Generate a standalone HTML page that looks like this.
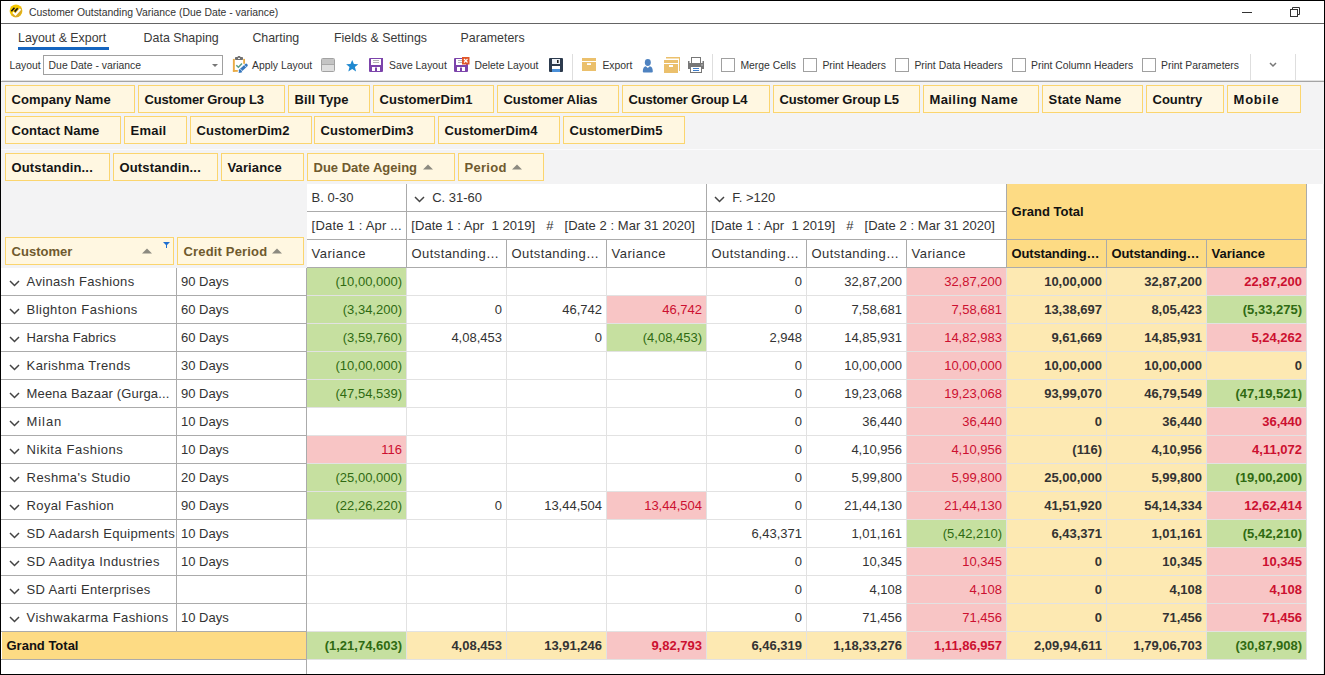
<!DOCTYPE html><html><head><meta charset="utf-8"><style>
html,body{margin:0;padding:0;width:1325px;height:675px;overflow:hidden;background:#fff}
body{position:relative;font-family:"Liberation Sans", sans-serif}
body>div,body>svg{position:absolute;white-space:nowrap}
</style></head><body>
<div style="left:0;top:0;width:1325px;height:675px;background:#fff"></div>
<svg style="left:9px;top:4px" width="14" height="14" viewBox="0 0 14 14">
<circle cx="7" cy="6.9" r="6.4" fill="#f6c800"/>
<path d="M2.5 11 L11.8 3.2 A6.4 6.4 0 0 1 5 13 Z" fill="#d6a62c" opacity="0.85"/>
<path d="M3.9 8.3 L6.5 10.6 L11.5 5" stroke="#fff" stroke-width="1.9" fill="none"/>
<path d="M2.3 7.3 L5.5 3.7 M5.6 7.6 L8.7 4.3" stroke="#151515" stroke-width="1.6"/>
</svg>
<div style="left:29px;top:6px;font-size:10.4px;color:#333;line-height:14px">Customer Outstanding Variance (Due Date - variance)</div>
<div style="left:1242px;top:12px;width:10px;height:1px;background:#333"></div>
<svg style="left:1289px;top:6px" width="12" height="12" viewBox="0 0 12 12">
<path d="M3.5 3 V1.5 H10.5 V8.5 H9" stroke="#333" stroke-width="1" fill="none"/>
<rect x="1.5" y="3.5" width="7" height="7" stroke="#333" stroke-width="1" fill="#fff"/>
</svg>
<div style="left:1px;top:23px;width:1323px;height:1px;background:#646464"></div>
<div style="left:18px;top:30px;font-size:12.4px;color:#3a3a3a;line-height:16px">Layout &amp; Export</div>
<div style="left:143.6px;top:30px;font-size:12.4px;color:#3a3a3a;line-height:16px">Data Shaping</div>
<div style="left:252.4px;top:30px;font-size:12.4px;color:#3a3a3a;line-height:16px">Charting</div>
<div style="left:334px;top:30px;font-size:12.4px;color:#3a3a3a;line-height:16px">Fields &amp; Settings</div>
<div style="left:460.6px;top:30px;font-size:12.4px;color:#3a3a3a;line-height:16px">Parameters</div>
<div style="left:18px;top:47px;width:91px;height:3px;background:#1565c0"></div>
<div style="left:9.5px;top:59px;font-size:10.4px;color:#333;line-height:14px">Layout</div>
<div style="left:43px;top:55px;width:180px;height:20px;border:1px solid #a0a0a0;box-sizing:border-box;background:#fff"></div>
<div style="left:48.6px;top:59px;font-size:10.4px;color:#333;line-height:14px">Due Date - variance</div>
<svg style="left:212px;top:64px" width="7" height="4"><path d="M0 0 H6 L3 3 Z" fill="#777"/></svg>
<svg style="left:232px;top:56px" width="16" height="18" viewBox="0 0 16 18">
<rect x="0.9" y="2.9" width="1.9" height="12.9" fill="#e9ab45"/>
<rect x="0.9" y="14" width="4.9" height="1.8" fill="#e9ab45"/>
<rect x="11.2" y="2.9" width="1.8" height="4.9" fill="#e9ab45"/>
<rect x="3" y="1" width="8" height="3" rx="0.8" fill="#707070"/>
<rect x="5.6" y="0" width="2.8" height="2" rx="0.8" fill="#707070"/>
<rect x="6" y="1.9" width="2" height="1" fill="#fff"/>
<path d="M4.3 9.3 L6.4 11.3 L10 7.4" stroke="#5a9e86" stroke-width="1.5" fill="none"/>
<path d="M8.4 14.6 L14.1 9.3" stroke="#3576bd" stroke-width="3.2" stroke-linecap="round"/>
<path d="M6.6 17 L7.3 13.3 L10.3 16.3 Z" fill="#3576bd"/>
<path d="M8.3 13 L10.2 15 M12.4 9.2 L14.3 11.2" stroke="#fff" stroke-width="0.7"/>
</svg>
<div style="left:252px;top:59px;font-size:10.4px;color:#333;line-height:14px">Apply Layout</div>
<div style="left:321px;top:58px;width:14px;height:14px;border:1px solid #a2a2a2;border-radius:1.5px;box-sizing:border-box;background:linear-gradient(#c4c4c4 0,#c4c4c4 4.5px,#a8a8a8 4.5px,#a8a8a8 5.5px,#dedede 5.5px)"></div>
<svg style="left:345.6px;top:59.8px" width="13" height="12" viewBox="0 0 13 12">
<path d="M6.2 0 L7.9 4.0 L12.3 4.2 L8.9 7.0 L10.1 11.4 L6.2 9.0 L2.3 11.4 L3.5 7.0 L0.1 4.2 L4.5 4.0 Z" fill="#1e88d0"/>
</svg>
<svg style="left:369px;top:58px" width="14" height="14" viewBox="0 0 14 14"><path d="M0 1 Q0 0 1 0 H14 V13 Q14 14 13 14 H1 Q0 14 0 13 Z" fill="#7c44ab"/>
<rect x="2" y="1" width="10" height="6" fill="#fff"/>
<rect x="4" y="2" width="6" height="1" fill="#b5b5b5"/><rect x="4" y="4" width="6" height="1" fill="#b5b5b5"/>
<rect x="3" y="9" width="8" height="4" fill="#fff"/><rect x="6" y="9.5" width="2" height="3.5" fill="#7c44ab"/></svg>
<div style="left:389px;top:59px;font-size:10.4px;color:#333;line-height:14px">Save Layout</div>
<svg style="left:454px;top:57px" width="16" height="15" viewBox="0 -1 16 15"><path d="M0 1 Q0 0 1 0 H14 V13 Q14 14 13 14 H1 Q0 14 0 13 Z" fill="#7c44ab"/>
<rect x="2" y="1" width="10" height="6" fill="#fff"/>
<rect x="4" y="2" width="6" height="1" fill="#b5b5b5"/><rect x="4" y="4" width="6" height="1" fill="#b5b5b5"/>
<rect x="3" y="9" width="8" height="4" fill="#fff"/><rect x="6" y="9.5" width="2" height="3.5" fill="#7c44ab"/>
<rect x="8" y="-1" width="7.5" height="7.5" fill="#e0572a"/>
<path d="M10 1 L13.5 4.5 M13.5 1 L10 4.5" stroke="#fff" stroke-width="1.1"/></svg>
<div style="left:474.4px;top:59px;font-size:10.4px;color:#333;line-height:14px">Delete Layout</div>
<svg style="left:549px;top:58px" width="14" height="14" viewBox="0 0 14 14">
<rect x="0" y="0" width="14" height="14" rx="1" fill="#2d3b4e"/>
<rect x="3" y="1" width="8" height="5" fill="#eef2f7"/><rect x="8" y="2" width="1.6" height="3" fill="#222"/>
<rect x="3" y="8" width="8" height="6" fill="#fff"/><rect x="3" y="11" width="8" height="3" fill="#4a90d9"/>
</svg>
<div style="left:572px;top:54px;width:1px;height:26px;background:#dedede"></div>
<svg style="left:582px;top:58px" width="14" height="13" viewBox="0 0 14 13">
<rect x="0" y="0" width="14" height="3" fill="#ebc06c"/>
<rect x="0" y="4" width="14" height="9" fill="#ebc06c"/>
<rect x="5" y="5.2" width="4" height="1.8" fill="#fff"/>
</svg>
<div style="left:602.4px;top:59px;font-size:10.4px;color:#333;line-height:14px">Export</div>
<svg style="left:642px;top:58px" width="12" height="15" viewBox="0 0 12 15">
<ellipse cx="5.8" cy="4.5" rx="3" ry="3.4" fill="#4e82c0"/>
<path d="M0.8 13.5 Q0.8 8.8 3.8 8.2 L5.8 10 L7.8 8.2 Q10.8 8.8 10.8 13.5 Q10.8 14.5 9.8 14.5 H1.8 Q0.8 14.5 0.8 13.5 Z" fill="#4e82c0"/>
</svg>
<svg style="left:664px;top:57px" width="17" height="16" viewBox="0 0 17 16">
<path d="M2 0 H16 V14 H15 V1.5 H2 Z" fill="#ebc06c"/>
<rect x="0" y="3" width="14" height="3" fill="#ebc06c"/>
<rect x="0" y="7" width="14" height="9" fill="#ebc06c"/>
<rect x="5" y="8" width="4" height="2" fill="#fff"/>
</svg>
<svg style="left:688px;top:57px" width="17" height="16" viewBox="0 0 17 16">
<rect x="3.5" y="0.5" width="9" height="6" stroke="#777" stroke-width="1" fill="#fff"/>
<path d="M0 4 H1.5 V6 H14.5 V4 H16 V12 H0 Z" fill="#777"/>
<rect x="2.5" y="9.5" width="11" height="6" stroke="#777" stroke-width="1" fill="#fff"/>
<rect x="5" y="11" width="6" height="1" fill="#3d7cc9"/><rect x="5" y="13" width="6" height="1" fill="#3d7cc9"/>
<rect x="13.5" y="7.5" width="1" height="1" fill="#fff"/>
</svg>
<div style="left:712px;top:54px;width:1px;height:26px;background:#dedede"></div>
<div style="left:721px;top:58px;width:14px;height:14px;border:1px solid #a0a0a0;box-sizing:border-box;background:#fff"></div>
<div style="left:740.4px;top:59px;font-size:10.4px;color:#333;line-height:14px">Merge Cells</div>
<div style="left:803px;top:58px;width:14px;height:14px;border:1px solid #a0a0a0;box-sizing:border-box;background:#fff"></div>
<div style="left:822.4px;top:59px;font-size:10.4px;color:#333;line-height:14px">Print Headers</div>
<div style="left:895px;top:58px;width:14px;height:14px;border:1px solid #a0a0a0;box-sizing:border-box;background:#fff"></div>
<div style="left:914.4px;top:59px;font-size:10.4px;color:#333;line-height:14px">Print Data Headers</div>
<div style="left:1012px;top:58px;width:14px;height:14px;border:1px solid #a0a0a0;box-sizing:border-box;background:#fff"></div>
<div style="left:1031px;top:59px;font-size:10.4px;color:#333;line-height:14px">Print Column Headers</div>
<div style="left:1142px;top:58px;width:14px;height:14px;border:1px solid #a0a0a0;box-sizing:border-box;background:#fff"></div>
<div style="left:1161px;top:59px;font-size:10.4px;color:#333;line-height:14px">Print Parameters</div>
<div style="left:1250px;top:54px;width:1px;height:26px;background:#dedede"></div>
<svg style="left:1269px;top:62px" width="8" height="6"><path d="M1 1 L4 4 L7 1" stroke="#777" stroke-width="1.5" fill="none"/></svg>
<div style="left:1295px;top:54px;width:1px;height:26px;background:#dedede"></div>
<div style="left:2px;top:80px;width:1322px;height:1px;background:#e2e2e2"></div>
<div style="left:1px;top:81px;width:1323px;height:1px;background:#a4a4a4"></div>
<div style="left:1px;top:82px;width:1323px;height:186px;background:#f3f3f4"></div>
<div style="left:1px;top:149px;width:1323px;height:1px;background:#fbfbfd"></div>
<div style="left:5px;top:85px;width:130px;height:28px;border:1px solid #fbd56e;box-sizing:border-box;background:#fff7e1"></div>
<div style="left:11.5px;top:92px;font-size:13px;font-weight:bold;color:#141414;line-height:16px;white-space:nowrap;letter-spacing:0.091px">Company Name</div>
<div style="left:138px;top:85px;width:147px;height:28px;border:1px solid #fbd56e;box-sizing:border-box;background:#fff7e1"></div>
<div style="left:144.5px;top:92px;font-size:13px;font-weight:bold;color:#141414;line-height:16px;white-space:nowrap;letter-spacing:-0.162px">Customer Group L3</div>
<div style="left:288px;top:85px;width:82px;height:28px;border:1px solid #fbd56e;box-sizing:border-box;background:#fff7e1"></div>
<div style="left:294.5px;top:92px;font-size:13px;font-weight:bold;color:#141414;line-height:16px;white-space:nowrap;letter-spacing:0.1px">Bill Type</div>
<div style="left:373px;top:85px;width:121px;height:28px;border:1px solid #fbd56e;box-sizing:border-box;background:#fff7e1"></div>
<div style="left:379.5px;top:92px;font-size:13px;font-weight:bold;color:#141414;line-height:16px;white-space:nowrap;letter-spacing:0.036px">CustomerDim1</div>
<div style="left:497px;top:85px;width:122px;height:28px;border:1px solid #fbd56e;box-sizing:border-box;background:#fff7e1"></div>
<div style="left:503.5px;top:92px;font-size:13px;font-weight:bold;color:#141414;line-height:16px;white-space:nowrap;letter-spacing:-0.077px">Customer Alias</div>
<div style="left:622px;top:85px;width:148px;height:28px;border:1px solid #fbd56e;box-sizing:border-box;background:#fff7e1"></div>
<div style="left:628.5px;top:92px;font-size:13px;font-weight:bold;color:#141414;line-height:16px;white-space:nowrap;letter-spacing:-0.2px">Customer Group L4</div>
<div style="left:773px;top:85px;width:147px;height:28px;border:1px solid #fbd56e;box-sizing:border-box;background:#fff7e1"></div>
<div style="left:779.5px;top:92px;font-size:13px;font-weight:bold;color:#141414;line-height:16px;white-space:nowrap;letter-spacing:-0.163px">Customer Group L5</div>
<div style="left:923px;top:85px;width:116px;height:28px;border:1px solid #fbd56e;box-sizing:border-box;background:#fff7e1"></div>
<div style="left:929.5px;top:92px;font-size:13px;font-weight:bold;color:#141414;line-height:16px;white-space:nowrap;letter-spacing:0.4px">Mailing Name</div>
<div style="left:1042px;top:85px;width:101px;height:28px;border:1px solid #fbd56e;box-sizing:border-box;background:#fff7e1"></div>
<div style="left:1048.5px;top:92px;font-size:13px;font-weight:bold;color:#141414;line-height:16px;white-space:nowrap;letter-spacing:0.211px">State Name</div>
<div style="left:1146px;top:85px;width:78px;height:28px;border:1px solid #fbd56e;box-sizing:border-box;background:#fff7e1"></div>
<div style="left:1152.5px;top:92px;font-size:13px;font-weight:bold;color:#141414;line-height:16px;white-space:nowrap;letter-spacing:0.0px">Country</div>
<div style="left:1227px;top:85px;width:74px;height:28px;border:1px solid #fbd56e;box-sizing:border-box;background:#fff7e1"></div>
<div style="left:1233.5px;top:92px;font-size:13px;font-weight:bold;color:#141414;line-height:16px;white-space:nowrap;letter-spacing:0.8px">Mobile</div>
<div style="left:5px;top:116px;width:116px;height:28px;border:1px solid #fbd56e;box-sizing:border-box;background:#fff7e1"></div>
<div style="left:11.5px;top:123px;font-size:13px;font-weight:bold;color:#141414;line-height:16px;white-space:nowrap;letter-spacing:0.036px">Contact Name</div>
<div style="left:124px;top:116px;width:63px;height:28px;border:1px solid #fbd56e;box-sizing:border-box;background:#fff7e1"></div>
<div style="left:130.5px;top:123px;font-size:13px;font-weight:bold;color:#141414;line-height:16px;white-space:nowrap;letter-spacing:0.25px">Email</div>
<div style="left:190px;top:116px;width:122px;height:28px;border:1px solid #fbd56e;box-sizing:border-box;background:#fff7e1"></div>
<div style="left:196.5px;top:123px;font-size:13px;font-weight:bold;color:#141414;line-height:16px;white-space:nowrap;letter-spacing:0.036px">CustomerDim2</div>
<div style="left:314px;top:116px;width:121px;height:28px;border:1px solid #fbd56e;box-sizing:border-box;background:#fff7e1"></div>
<div style="left:320.5px;top:123px;font-size:13px;font-weight:bold;color:#141414;line-height:16px;white-space:nowrap;letter-spacing:0.036px">CustomerDim3</div>
<div style="left:438px;top:116px;width:122px;height:28px;border:1px solid #fbd56e;box-sizing:border-box;background:#fff7e1"></div>
<div style="left:444.5px;top:123px;font-size:13px;font-weight:bold;color:#141414;line-height:16px;white-space:nowrap;letter-spacing:0.036px">CustomerDim4</div>
<div style="left:563px;top:116px;width:122px;height:28px;border:1px solid #fbd56e;box-sizing:border-box;background:#fff7e1"></div>
<div style="left:569.5px;top:123px;font-size:13px;font-weight:bold;color:#141414;line-height:16px;white-space:nowrap;letter-spacing:0.036px">CustomerDim5</div>
<div style="left:5px;top:153px;width:105px;height:28px;border:1px solid #fbd56e;box-sizing:border-box;background:#fff7e1"></div>
<div style="left:11.5px;top:160px;font-size:13px;font-weight:bold;color:#141414;line-height:16px;white-space:nowrap;letter-spacing:0.15px">Outstandin...</div>
<div style="left:113px;top:153px;width:105px;height:28px;border:1px solid #fbd56e;box-sizing:border-box;background:#fff7e1"></div>
<div style="left:119.5px;top:160px;font-size:13px;font-weight:bold;color:#141414;line-height:16px;white-space:nowrap;letter-spacing:0.15px">Outstandin...</div>
<div style="left:221px;top:153px;width:83px;height:28px;border:1px solid #fbd56e;box-sizing:border-box;background:#fff7e1"></div>
<div style="left:227.5px;top:160px;font-size:13px;font-weight:bold;color:#141414;line-height:16px;white-space:nowrap;letter-spacing:0.114px">Variance</div>
<div style="left:307px;top:153px;width:148px;height:28px;border:1px solid #fbd56e;box-sizing:border-box;background:#fff7e1"></div>
<div style="left:313.5px;top:160px;font-size:13px;font-weight:bold;color:#6f5a2e;line-height:16px;white-space:nowrap;letter-spacing:0.0px">Due Date Ageing</div>
<svg style="left:423px;top:163.5px" width="10" height="6"><path d="M0 5.5 L5 0.5 L10 5.5 Z" fill="#8c8a80"/></svg>
<div style="left:458px;top:153px;width:86px;height:28px;border:1px solid #fbd56e;box-sizing:border-box;background:#fff7e1"></div>
<div style="left:464.5px;top:160px;font-size:13px;font-weight:bold;color:#6f5a2e;line-height:16px;white-space:nowrap;letter-spacing:0.28px">Period</div>
<svg style="left:512px;top:163.5px" width="10" height="6"><path d="M0 5.5 L5 0.5 L10 5.5 Z" fill="#8c8a80"/></svg>
<div style="left:5px;top:237px;width:169px;height:28px;border:1px solid #fbd56e;box-sizing:border-box;background:#fff7e1"></div>
<div style="left:11.5px;top:244px;font-size:13px;font-weight:bold;color:#6f5a2e;line-height:16px;white-space:nowrap;letter-spacing:0.029px">Customer</div>
<svg style="left:142px;top:247.5px" width="10" height="6"><path d="M0 5.5 L5 0.5 L10 5.5 Z" fill="#8c8a80"/></svg>
<svg style="left:163px;top:242px" width="7" height="6"><path d="M0 0 H7 L4 3 V6 H3 V3 Z" fill="#1f6fd0"/></svg>
<div style="left:177px;top:237px;width:127px;height:28px;border:1px solid #fbd56e;box-sizing:border-box;background:#fff7e1"></div>
<div style="left:183.5px;top:244px;font-size:13px;font-weight:bold;color:#6f5a2e;line-height:16px;white-space:nowrap;letter-spacing:0.167px">Credit Period</div>
<svg style="left:272px;top:247.5px" width="10" height="6"><path d="M0 5.5 L5 0.5 L10 5.5 Z" fill="#8c8a80"/></svg>
<div style="left:307px;top:184px;width:1016px;height:490px;background:#fff"></div>
<div style="left:1px;top:268px;width:306px;height:406px;background:#fff"></div>
<div style="left:1323px;top:184px;width:1px;height:490px;background:#e8e8e8"></div>
<div style="left:307px;top:184px;width:1000px;height:84px;background:#fff"></div>
<div style="left:1007px;top:184px;width:300px;height:83px;background:#fddb84"></div>
<div style="left:406px;top:184px;width:1px;height:83px;background:#ababab"></div>
<div style="left:706px;top:184px;width:1px;height:83px;background:#ababab"></div>
<div style="left:1006px;top:184px;width:1px;height:83px;background:#ababab"></div>
<div style="left:506px;top:240px;width:1px;height:27px;background:#ababab"></div>
<div style="left:606px;top:240px;width:1px;height:27px;background:#ababab"></div>
<div style="left:806px;top:240px;width:1px;height:27px;background:#ababab"></div>
<div style="left:906px;top:240px;width:1px;height:27px;background:#ababab"></div>
<div style="left:1106px;top:240px;width:1px;height:27px;background:#ababab"></div>
<div style="left:1206px;top:240px;width:1px;height:27px;background:#ababab"></div>
<div style="left:1306px;top:184px;width:1px;height:83px;background:#ababab"></div>
<div style="left:307px;top:211px;width:700px;height:1px;background:#ababab"></div>
<div style="left:307px;top:239px;width:1000px;height:1px;background:#ababab"></div>
<div style="left:307px;top:267px;width:1000px;height:1px;background:#ababab"></div>
<div style="left:311.6px;top:190px;font-size:13px;line-height:16px;white-space:nowrap;color:#333333">B. 0-30</div>
<svg style="left:414px;top:195.5px" width="11" height="7"><path d="M1 1 L5.5 5.5 L10 1" stroke="#444" stroke-width="1.5" fill="none"/></svg>
<div style="left:432.2px;top:190px;font-size:13px;line-height:16px;white-space:nowrap;color:#333333">C. 31-60</div>
<svg style="left:714px;top:195.5px" width="11" height="7"><path d="M1 1 L5.5 5.5 L10 1" stroke="#444" stroke-width="1.5" fill="none"/></svg>
<div style="left:732.2px;top:190px;font-size:13px;line-height:16px;white-space:nowrap;color:#333333">F. &gt;120</div>
<div style="left:1011.6px;top:203.5px;font-size:13px;line-height:16px;white-space:nowrap;font-weight:bold;color:#111">Grand Total</div>
<div style="left:311.6px;top:218px;font-size:13px;line-height:16px;white-space:nowrap;color:#333333;letter-spacing:0.2px">[Date 1 : Apr ...</div>
<div style="left:411.3px;top:218px;font-size:13px;line-height:16px;white-space:nowrap;color:#333333;letter-spacing:0.05px">[Date 1 : Apr&nbsp; 1 2019]&nbsp;&nbsp; #&nbsp;&nbsp; [Date 2 : Mar 31 2020]</div>
<div style="left:711.3px;top:218px;font-size:13px;line-height:16px;white-space:nowrap;color:#333333;letter-spacing:0.05px">[Date 1 : Apr&nbsp; 1 2019]&nbsp;&nbsp; #&nbsp;&nbsp; [Date 2 : Mar 31 2020]</div>
<div style="left:311.6px;top:246px;font-size:13px;line-height:16px;white-space:nowrap;color:#333333;letter-spacing:0.5px">Variance</div>
<div style="left:411.6px;top:246px;font-size:13px;line-height:16px;white-space:nowrap;color:#333333;letter-spacing:0.4px">Outstanding…</div>
<div style="left:511.6px;top:246px;font-size:13px;line-height:16px;white-space:nowrap;color:#333333;letter-spacing:0.4px">Outstanding…</div>
<div style="left:611.6px;top:246px;font-size:13px;line-height:16px;white-space:nowrap;color:#333333;letter-spacing:0.5px">Variance</div>
<div style="left:711.6px;top:246px;font-size:13px;line-height:16px;white-space:nowrap;color:#333333;letter-spacing:0.4px">Outstanding…</div>
<div style="left:811.6px;top:246px;font-size:13px;line-height:16px;white-space:nowrap;color:#333333;letter-spacing:0.4px">Outstanding…</div>
<div style="left:911.6px;top:246px;font-size:13px;line-height:16px;white-space:nowrap;color:#333333;letter-spacing:0.5px">Variance</div>
<div style="left:1011.6px;top:246px;font-size:13px;line-height:16px;white-space:nowrap;font-weight:bold;color:#111;letter-spacing:-0.15px">Outstanding…</div>
<div style="left:1111.6px;top:246px;font-size:13px;line-height:16px;white-space:nowrap;font-weight:bold;color:#111;letter-spacing:-0.15px">Outstanding…</div>
<div style="left:1211.6px;top:246px;font-size:13px;line-height:16px;white-space:nowrap;font-weight:bold;color:#111">Variance</div>
<svg style="left:9.2px;top:279.5px" width="11" height="7"><path d="M1 1 L5.5 5.5 L10 1" stroke="#444" stroke-width="1.5" fill="none"/></svg>
<div style="left:26.6px;top:274px;font-size:13px;line-height:16px;white-space:nowrap;color:#333333;letter-spacing:0.347px">Avinash Fashions</div>
<div style="left:181px;top:274px;font-size:13px;line-height:16px;white-space:nowrap;color:#333333">90 Days</div>
<div style="left:307px;top:268px;width:99px;height:27px;background:#c6e0a0"></div>
<div style="left:307px;top:274px;width:95px;text-align:right;font-size:13px;line-height:16px;white-space:nowrap;color:#2f6a12">(10,00,000)</div>
<div style="left:707px;top:274px;width:95px;text-align:right;font-size:13px;line-height:16px;white-space:nowrap;color:#333333">0</div>
<div style="left:807px;top:274px;width:95px;text-align:right;font-size:13px;line-height:16px;white-space:nowrap;color:#333333">32,87,200</div>
<div style="left:907px;top:268px;width:99px;height:27px;background:#f8c5c5"></div>
<div style="left:907px;top:274px;width:95px;text-align:right;font-size:13px;line-height:16px;white-space:nowrap;color:#cc1030">32,87,200</div>
<div style="left:1007px;top:268px;width:99px;height:27px;background:#fde9b2"></div>
<div style="left:1007px;top:274px;width:95px;text-align:right;font-size:13px;line-height:16px;white-space:nowrap;font-weight:bold;color:#333333">10,00,000</div>
<div style="left:1107px;top:268px;width:99px;height:27px;background:#fde9b2"></div>
<div style="left:1107px;top:274px;width:95px;text-align:right;font-size:13px;line-height:16px;white-space:nowrap;font-weight:bold;color:#333333">32,87,200</div>
<div style="left:1207px;top:268px;width:99px;height:27px;background:#f8c5c5"></div>
<div style="left:1207px;top:274px;width:95px;text-align:right;font-size:13px;line-height:16px;white-space:nowrap;font-weight:bold;color:#cc1030">22,87,200</div>
<div style="left:1px;top:295px;width:306px;height:1px;background:#ababab"></div>
<div style="left:307px;top:295px;width:1000px;height:1px;background:#e2e2e2"></div>
<svg style="left:9.2px;top:307.5px" width="11" height="7"><path d="M1 1 L5.5 5.5 L10 1" stroke="#444" stroke-width="1.5" fill="none"/></svg>
<div style="left:26.6px;top:302px;font-size:13px;line-height:16px;white-space:nowrap;color:#333333;letter-spacing:0.462px">Blighton Fashions</div>
<div style="left:181px;top:302px;font-size:13px;line-height:16px;white-space:nowrap;color:#333333">60 Days</div>
<div style="left:307px;top:296px;width:99px;height:27px;background:#c6e0a0"></div>
<div style="left:307px;top:302px;width:95px;text-align:right;font-size:13px;line-height:16px;white-space:nowrap;color:#2f6a12">(3,34,200)</div>
<div style="left:407px;top:302px;width:95px;text-align:right;font-size:13px;line-height:16px;white-space:nowrap;color:#333333">0</div>
<div style="left:507px;top:302px;width:95px;text-align:right;font-size:13px;line-height:16px;white-space:nowrap;color:#333333">46,742</div>
<div style="left:607px;top:296px;width:99px;height:27px;background:#f8c5c5"></div>
<div style="left:607px;top:302px;width:95px;text-align:right;font-size:13px;line-height:16px;white-space:nowrap;color:#cc1030">46,742</div>
<div style="left:707px;top:302px;width:95px;text-align:right;font-size:13px;line-height:16px;white-space:nowrap;color:#333333">0</div>
<div style="left:807px;top:302px;width:95px;text-align:right;font-size:13px;line-height:16px;white-space:nowrap;color:#333333">7,58,681</div>
<div style="left:907px;top:296px;width:99px;height:27px;background:#f8c5c5"></div>
<div style="left:907px;top:302px;width:95px;text-align:right;font-size:13px;line-height:16px;white-space:nowrap;color:#cc1030">7,58,681</div>
<div style="left:1007px;top:296px;width:99px;height:27px;background:#fde9b2"></div>
<div style="left:1007px;top:302px;width:95px;text-align:right;font-size:13px;line-height:16px;white-space:nowrap;font-weight:bold;color:#333333">13,38,697</div>
<div style="left:1107px;top:296px;width:99px;height:27px;background:#fde9b2"></div>
<div style="left:1107px;top:302px;width:95px;text-align:right;font-size:13px;line-height:16px;white-space:nowrap;font-weight:bold;color:#333333">8,05,423</div>
<div style="left:1207px;top:296px;width:99px;height:27px;background:#c6e0a0"></div>
<div style="left:1207px;top:302px;width:95px;text-align:right;font-size:13px;line-height:16px;white-space:nowrap;font-weight:bold;color:#2f6a12">(5,33,275)</div>
<div style="left:1px;top:323px;width:306px;height:1px;background:#ababab"></div>
<div style="left:307px;top:323px;width:1000px;height:1px;background:#e2e2e2"></div>
<svg style="left:9.2px;top:335.5px" width="11" height="7"><path d="M1 1 L5.5 5.5 L10 1" stroke="#444" stroke-width="1.5" fill="none"/></svg>
<div style="left:26.6px;top:330px;font-size:13px;line-height:16px;white-space:nowrap;color:#333333;letter-spacing:0.092px">Harsha Fabrics</div>
<div style="left:181px;top:330px;font-size:13px;line-height:16px;white-space:nowrap;color:#333333">60 Days</div>
<div style="left:307px;top:324px;width:99px;height:27px;background:#c6e0a0"></div>
<div style="left:307px;top:330px;width:95px;text-align:right;font-size:13px;line-height:16px;white-space:nowrap;color:#2f6a12">(3,59,760)</div>
<div style="left:407px;top:330px;width:95px;text-align:right;font-size:13px;line-height:16px;white-space:nowrap;color:#333333">4,08,453</div>
<div style="left:507px;top:330px;width:95px;text-align:right;font-size:13px;line-height:16px;white-space:nowrap;color:#333333">0</div>
<div style="left:607px;top:324px;width:99px;height:27px;background:#c6e0a0"></div>
<div style="left:607px;top:330px;width:95px;text-align:right;font-size:13px;line-height:16px;white-space:nowrap;color:#2f6a12">(4,08,453)</div>
<div style="left:707px;top:330px;width:95px;text-align:right;font-size:13px;line-height:16px;white-space:nowrap;color:#333333">2,948</div>
<div style="left:807px;top:330px;width:95px;text-align:right;font-size:13px;line-height:16px;white-space:nowrap;color:#333333">14,85,931</div>
<div style="left:907px;top:324px;width:99px;height:27px;background:#f8c5c5"></div>
<div style="left:907px;top:330px;width:95px;text-align:right;font-size:13px;line-height:16px;white-space:nowrap;color:#cc1030">14,82,983</div>
<div style="left:1007px;top:324px;width:99px;height:27px;background:#fde9b2"></div>
<div style="left:1007px;top:330px;width:95px;text-align:right;font-size:13px;line-height:16px;white-space:nowrap;font-weight:bold;color:#333333">9,61,669</div>
<div style="left:1107px;top:324px;width:99px;height:27px;background:#fde9b2"></div>
<div style="left:1107px;top:330px;width:95px;text-align:right;font-size:13px;line-height:16px;white-space:nowrap;font-weight:bold;color:#333333">14,85,931</div>
<div style="left:1207px;top:324px;width:99px;height:27px;background:#f8c5c5"></div>
<div style="left:1207px;top:330px;width:95px;text-align:right;font-size:13px;line-height:16px;white-space:nowrap;font-weight:bold;color:#cc1030">5,24,262</div>
<div style="left:1px;top:351px;width:306px;height:1px;background:#ababab"></div>
<div style="left:307px;top:351px;width:1000px;height:1px;background:#e2e2e2"></div>
<svg style="left:9.2px;top:363.5px" width="11" height="7"><path d="M1 1 L5.5 5.5 L10 1" stroke="#444" stroke-width="1.5" fill="none"/></svg>
<div style="left:26.6px;top:358px;font-size:13px;line-height:16px;white-space:nowrap;color:#333333;letter-spacing:0.386px">Karishma Trends</div>
<div style="left:181px;top:358px;font-size:13px;line-height:16px;white-space:nowrap;color:#333333">30 Days</div>
<div style="left:307px;top:352px;width:99px;height:27px;background:#c6e0a0"></div>
<div style="left:307px;top:358px;width:95px;text-align:right;font-size:13px;line-height:16px;white-space:nowrap;color:#2f6a12">(10,00,000)</div>
<div style="left:707px;top:358px;width:95px;text-align:right;font-size:13px;line-height:16px;white-space:nowrap;color:#333333">0</div>
<div style="left:807px;top:358px;width:95px;text-align:right;font-size:13px;line-height:16px;white-space:nowrap;color:#333333">10,00,000</div>
<div style="left:907px;top:352px;width:99px;height:27px;background:#f8c5c5"></div>
<div style="left:907px;top:358px;width:95px;text-align:right;font-size:13px;line-height:16px;white-space:nowrap;color:#cc1030">10,00,000</div>
<div style="left:1007px;top:352px;width:99px;height:27px;background:#fde9b2"></div>
<div style="left:1007px;top:358px;width:95px;text-align:right;font-size:13px;line-height:16px;white-space:nowrap;font-weight:bold;color:#333333">10,00,000</div>
<div style="left:1107px;top:352px;width:99px;height:27px;background:#fde9b2"></div>
<div style="left:1107px;top:358px;width:95px;text-align:right;font-size:13px;line-height:16px;white-space:nowrap;font-weight:bold;color:#333333">10,00,000</div>
<div style="left:1207px;top:352px;width:99px;height:27px;background:#fde9b2"></div>
<div style="left:1207px;top:358px;width:95px;text-align:right;font-size:13px;line-height:16px;white-space:nowrap;font-weight:bold;color:#333333">0</div>
<div style="left:1px;top:379px;width:306px;height:1px;background:#ababab"></div>
<div style="left:307px;top:379px;width:1000px;height:1px;background:#e2e2e2"></div>
<svg style="left:9.2px;top:391.5px" width="11" height="7"><path d="M1 1 L5.5 5.5 L10 1" stroke="#444" stroke-width="1.5" fill="none"/></svg>
<div style="left:26.6px;top:386px;font-size:13px;line-height:16px;white-space:nowrap;color:#333333;letter-spacing:0.157px">Meena Bazaar (Gurga...</div>
<div style="left:181px;top:386px;font-size:13px;line-height:16px;white-space:nowrap;color:#333333">90 Days</div>
<div style="left:307px;top:380px;width:99px;height:27px;background:#c6e0a0"></div>
<div style="left:307px;top:386px;width:95px;text-align:right;font-size:13px;line-height:16px;white-space:nowrap;color:#2f6a12">(47,54,539)</div>
<div style="left:707px;top:386px;width:95px;text-align:right;font-size:13px;line-height:16px;white-space:nowrap;color:#333333">0</div>
<div style="left:807px;top:386px;width:95px;text-align:right;font-size:13px;line-height:16px;white-space:nowrap;color:#333333">19,23,068</div>
<div style="left:907px;top:380px;width:99px;height:27px;background:#f8c5c5"></div>
<div style="left:907px;top:386px;width:95px;text-align:right;font-size:13px;line-height:16px;white-space:nowrap;color:#cc1030">19,23,068</div>
<div style="left:1007px;top:380px;width:99px;height:27px;background:#fde9b2"></div>
<div style="left:1007px;top:386px;width:95px;text-align:right;font-size:13px;line-height:16px;white-space:nowrap;font-weight:bold;color:#333333">93,99,070</div>
<div style="left:1107px;top:380px;width:99px;height:27px;background:#fde9b2"></div>
<div style="left:1107px;top:386px;width:95px;text-align:right;font-size:13px;line-height:16px;white-space:nowrap;font-weight:bold;color:#333333">46,79,549</div>
<div style="left:1207px;top:380px;width:99px;height:27px;background:#c6e0a0"></div>
<div style="left:1207px;top:386px;width:95px;text-align:right;font-size:13px;line-height:16px;white-space:nowrap;font-weight:bold;color:#2f6a12">(47,19,521)</div>
<div style="left:1px;top:407px;width:306px;height:1px;background:#ababab"></div>
<div style="left:307px;top:407px;width:1000px;height:1px;background:#e2e2e2"></div>
<svg style="left:9.2px;top:419.5px" width="11" height="7"><path d="M1 1 L5.5 5.5 L10 1" stroke="#444" stroke-width="1.5" fill="none"/></svg>
<div style="left:26.6px;top:414px;font-size:13px;line-height:16px;white-space:nowrap;color:#333333;letter-spacing:0.9px">Milan</div>
<div style="left:181px;top:414px;font-size:13px;line-height:16px;white-space:nowrap;color:#333333">10 Days</div>
<div style="left:707px;top:414px;width:95px;text-align:right;font-size:13px;line-height:16px;white-space:nowrap;color:#333333">0</div>
<div style="left:807px;top:414px;width:95px;text-align:right;font-size:13px;line-height:16px;white-space:nowrap;color:#333333">36,440</div>
<div style="left:907px;top:408px;width:99px;height:27px;background:#f8c5c5"></div>
<div style="left:907px;top:414px;width:95px;text-align:right;font-size:13px;line-height:16px;white-space:nowrap;color:#cc1030">36,440</div>
<div style="left:1007px;top:408px;width:99px;height:27px;background:#fde9b2"></div>
<div style="left:1007px;top:414px;width:95px;text-align:right;font-size:13px;line-height:16px;white-space:nowrap;font-weight:bold;color:#333333">0</div>
<div style="left:1107px;top:408px;width:99px;height:27px;background:#fde9b2"></div>
<div style="left:1107px;top:414px;width:95px;text-align:right;font-size:13px;line-height:16px;white-space:nowrap;font-weight:bold;color:#333333">36,440</div>
<div style="left:1207px;top:408px;width:99px;height:27px;background:#f8c5c5"></div>
<div style="left:1207px;top:414px;width:95px;text-align:right;font-size:13px;line-height:16px;white-space:nowrap;font-weight:bold;color:#cc1030">36,440</div>
<div style="left:1px;top:435px;width:306px;height:1px;background:#ababab"></div>
<div style="left:307px;top:435px;width:1000px;height:1px;background:#e2e2e2"></div>
<svg style="left:9.2px;top:447.5px" width="11" height="7"><path d="M1 1 L5.5 5.5 L10 1" stroke="#444" stroke-width="1.5" fill="none"/></svg>
<div style="left:26.6px;top:442px;font-size:13px;line-height:16px;white-space:nowrap;color:#333333;letter-spacing:0.529px">Nikita Fashions</div>
<div style="left:181px;top:442px;font-size:13px;line-height:16px;white-space:nowrap;color:#333333">10 Days</div>
<div style="left:307px;top:436px;width:99px;height:27px;background:#f8c5c5"></div>
<div style="left:307px;top:442px;width:95px;text-align:right;font-size:13px;line-height:16px;white-space:nowrap;color:#cc1030">116</div>
<div style="left:707px;top:442px;width:95px;text-align:right;font-size:13px;line-height:16px;white-space:nowrap;color:#333333">0</div>
<div style="left:807px;top:442px;width:95px;text-align:right;font-size:13px;line-height:16px;white-space:nowrap;color:#333333">4,10,956</div>
<div style="left:907px;top:436px;width:99px;height:27px;background:#f8c5c5"></div>
<div style="left:907px;top:442px;width:95px;text-align:right;font-size:13px;line-height:16px;white-space:nowrap;color:#cc1030">4,10,956</div>
<div style="left:1007px;top:436px;width:99px;height:27px;background:#fde9b2"></div>
<div style="left:1007px;top:442px;width:95px;text-align:right;font-size:13px;line-height:16px;white-space:nowrap;font-weight:bold;color:#333333">(116)</div>
<div style="left:1107px;top:436px;width:99px;height:27px;background:#fde9b2"></div>
<div style="left:1107px;top:442px;width:95px;text-align:right;font-size:13px;line-height:16px;white-space:nowrap;font-weight:bold;color:#333333">4,10,956</div>
<div style="left:1207px;top:436px;width:99px;height:27px;background:#f8c5c5"></div>
<div style="left:1207px;top:442px;width:95px;text-align:right;font-size:13px;line-height:16px;white-space:nowrap;font-weight:bold;color:#cc1030">4,11,072</div>
<div style="left:1px;top:463px;width:306px;height:1px;background:#ababab"></div>
<div style="left:307px;top:463px;width:1000px;height:1px;background:#e2e2e2"></div>
<svg style="left:9.2px;top:475.5px" width="11" height="7"><path d="M1 1 L5.5 5.5 L10 1" stroke="#444" stroke-width="1.5" fill="none"/></svg>
<div style="left:26.6px;top:470px;font-size:13px;line-height:16px;white-space:nowrap;color:#333333;letter-spacing:0.407px">Reshma's Studio</div>
<div style="left:181px;top:470px;font-size:13px;line-height:16px;white-space:nowrap;color:#333333">20 Days</div>
<div style="left:307px;top:464px;width:99px;height:27px;background:#c6e0a0"></div>
<div style="left:307px;top:470px;width:95px;text-align:right;font-size:13px;line-height:16px;white-space:nowrap;color:#2f6a12">(25,00,000)</div>
<div style="left:707px;top:470px;width:95px;text-align:right;font-size:13px;line-height:16px;white-space:nowrap;color:#333333">0</div>
<div style="left:807px;top:470px;width:95px;text-align:right;font-size:13px;line-height:16px;white-space:nowrap;color:#333333">5,99,800</div>
<div style="left:907px;top:464px;width:99px;height:27px;background:#f8c5c5"></div>
<div style="left:907px;top:470px;width:95px;text-align:right;font-size:13px;line-height:16px;white-space:nowrap;color:#cc1030">5,99,800</div>
<div style="left:1007px;top:464px;width:99px;height:27px;background:#fde9b2"></div>
<div style="left:1007px;top:470px;width:95px;text-align:right;font-size:13px;line-height:16px;white-space:nowrap;font-weight:bold;color:#333333">25,00,000</div>
<div style="left:1107px;top:464px;width:99px;height:27px;background:#fde9b2"></div>
<div style="left:1107px;top:470px;width:95px;text-align:right;font-size:13px;line-height:16px;white-space:nowrap;font-weight:bold;color:#333333">5,99,800</div>
<div style="left:1207px;top:464px;width:99px;height:27px;background:#c6e0a0"></div>
<div style="left:1207px;top:470px;width:95px;text-align:right;font-size:13px;line-height:16px;white-space:nowrap;font-weight:bold;color:#2f6a12">(19,00,200)</div>
<div style="left:1px;top:491px;width:306px;height:1px;background:#ababab"></div>
<div style="left:307px;top:491px;width:1000px;height:1px;background:#e2e2e2"></div>
<svg style="left:9.2px;top:503.5px" width="11" height="7"><path d="M1 1 L5.5 5.5 L10 1" stroke="#444" stroke-width="1.5" fill="none"/></svg>
<div style="left:26.6px;top:498px;font-size:13px;line-height:16px;white-space:nowrap;color:#333333;letter-spacing:0.342px">Royal Fashion</div>
<div style="left:181px;top:498px;font-size:13px;line-height:16px;white-space:nowrap;color:#333333">90 Days</div>
<div style="left:307px;top:492px;width:99px;height:27px;background:#c6e0a0"></div>
<div style="left:307px;top:498px;width:95px;text-align:right;font-size:13px;line-height:16px;white-space:nowrap;color:#2f6a12">(22,26,220)</div>
<div style="left:407px;top:498px;width:95px;text-align:right;font-size:13px;line-height:16px;white-space:nowrap;color:#333333">0</div>
<div style="left:507px;top:498px;width:95px;text-align:right;font-size:13px;line-height:16px;white-space:nowrap;color:#333333">13,44,504</div>
<div style="left:607px;top:492px;width:99px;height:27px;background:#f8c5c5"></div>
<div style="left:607px;top:498px;width:95px;text-align:right;font-size:13px;line-height:16px;white-space:nowrap;color:#cc1030">13,44,504</div>
<div style="left:707px;top:498px;width:95px;text-align:right;font-size:13px;line-height:16px;white-space:nowrap;color:#333333">0</div>
<div style="left:807px;top:498px;width:95px;text-align:right;font-size:13px;line-height:16px;white-space:nowrap;color:#333333">21,44,130</div>
<div style="left:907px;top:492px;width:99px;height:27px;background:#f8c5c5"></div>
<div style="left:907px;top:498px;width:95px;text-align:right;font-size:13px;line-height:16px;white-space:nowrap;color:#cc1030">21,44,130</div>
<div style="left:1007px;top:492px;width:99px;height:27px;background:#fde9b2"></div>
<div style="left:1007px;top:498px;width:95px;text-align:right;font-size:13px;line-height:16px;white-space:nowrap;font-weight:bold;color:#333333">41,51,920</div>
<div style="left:1107px;top:492px;width:99px;height:27px;background:#fde9b2"></div>
<div style="left:1107px;top:498px;width:95px;text-align:right;font-size:13px;line-height:16px;white-space:nowrap;font-weight:bold;color:#333333">54,14,334</div>
<div style="left:1207px;top:492px;width:99px;height:27px;background:#f8c5c5"></div>
<div style="left:1207px;top:498px;width:95px;text-align:right;font-size:13px;line-height:16px;white-space:nowrap;font-weight:bold;color:#cc1030">12,62,414</div>
<div style="left:1px;top:519px;width:306px;height:1px;background:#ababab"></div>
<div style="left:307px;top:519px;width:1000px;height:1px;background:#e2e2e2"></div>
<svg style="left:9.2px;top:531.5px" width="11" height="7"><path d="M1 1 L5.5 5.5 L10 1" stroke="#444" stroke-width="1.5" fill="none"/></svg>
<div style="left:26.6px;top:526px;font-size:13px;line-height:16px;white-space:nowrap;color:#333333;letter-spacing:0.325px">SD Aadarsh Equipments</div>
<div style="left:181px;top:526px;font-size:13px;line-height:16px;white-space:nowrap;color:#333333">10 Days</div>
<div style="left:707px;top:526px;width:95px;text-align:right;font-size:13px;line-height:16px;white-space:nowrap;color:#333333">6,43,371</div>
<div style="left:807px;top:526px;width:95px;text-align:right;font-size:13px;line-height:16px;white-space:nowrap;color:#333333">1,01,161</div>
<div style="left:907px;top:520px;width:99px;height:27px;background:#c6e0a0"></div>
<div style="left:907px;top:526px;width:95px;text-align:right;font-size:13px;line-height:16px;white-space:nowrap;color:#2f6a12">(5,42,210)</div>
<div style="left:1007px;top:520px;width:99px;height:27px;background:#fde9b2"></div>
<div style="left:1007px;top:526px;width:95px;text-align:right;font-size:13px;line-height:16px;white-space:nowrap;font-weight:bold;color:#333333">6,43,371</div>
<div style="left:1107px;top:520px;width:99px;height:27px;background:#fde9b2"></div>
<div style="left:1107px;top:526px;width:95px;text-align:right;font-size:13px;line-height:16px;white-space:nowrap;font-weight:bold;color:#333333">1,01,161</div>
<div style="left:1207px;top:520px;width:99px;height:27px;background:#c6e0a0"></div>
<div style="left:1207px;top:526px;width:95px;text-align:right;font-size:13px;line-height:16px;white-space:nowrap;font-weight:bold;color:#2f6a12">(5,42,210)</div>
<div style="left:1px;top:547px;width:306px;height:1px;background:#ababab"></div>
<div style="left:307px;top:547px;width:1000px;height:1px;background:#e2e2e2"></div>
<svg style="left:9.2px;top:559.5px" width="11" height="7"><path d="M1 1 L5.5 5.5 L10 1" stroke="#444" stroke-width="1.5" fill="none"/></svg>
<div style="left:26.6px;top:554px;font-size:13px;line-height:16px;white-space:nowrap;color:#333333;letter-spacing:0.43px">SD Aaditya Industries</div>
<div style="left:181px;top:554px;font-size:13px;line-height:16px;white-space:nowrap;color:#333333">10 Days</div>
<div style="left:707px;top:554px;width:95px;text-align:right;font-size:13px;line-height:16px;white-space:nowrap;color:#333333">0</div>
<div style="left:807px;top:554px;width:95px;text-align:right;font-size:13px;line-height:16px;white-space:nowrap;color:#333333">10,345</div>
<div style="left:907px;top:548px;width:99px;height:27px;background:#f8c5c5"></div>
<div style="left:907px;top:554px;width:95px;text-align:right;font-size:13px;line-height:16px;white-space:nowrap;color:#cc1030">10,345</div>
<div style="left:1007px;top:548px;width:99px;height:27px;background:#fde9b2"></div>
<div style="left:1007px;top:554px;width:95px;text-align:right;font-size:13px;line-height:16px;white-space:nowrap;font-weight:bold;color:#333333">0</div>
<div style="left:1107px;top:548px;width:99px;height:27px;background:#fde9b2"></div>
<div style="left:1107px;top:554px;width:95px;text-align:right;font-size:13px;line-height:16px;white-space:nowrap;font-weight:bold;color:#333333">10,345</div>
<div style="left:1207px;top:548px;width:99px;height:27px;background:#f8c5c5"></div>
<div style="left:1207px;top:554px;width:95px;text-align:right;font-size:13px;line-height:16px;white-space:nowrap;font-weight:bold;color:#cc1030">10,345</div>
<div style="left:1px;top:575px;width:306px;height:1px;background:#ababab"></div>
<div style="left:307px;top:575px;width:1000px;height:1px;background:#e2e2e2"></div>
<svg style="left:9.2px;top:587.5px" width="11" height="7"><path d="M1 1 L5.5 5.5 L10 1" stroke="#444" stroke-width="1.5" fill="none"/></svg>
<div style="left:26.6px;top:582px;font-size:13px;line-height:16px;white-space:nowrap;color:#333333;letter-spacing:0.347px">SD Aarti Enterprises</div>
<div style="left:181px;top:582px;font-size:13px;line-height:16px;white-space:nowrap;color:#333333"></div>
<div style="left:707px;top:582px;width:95px;text-align:right;font-size:13px;line-height:16px;white-space:nowrap;color:#333333">0</div>
<div style="left:807px;top:582px;width:95px;text-align:right;font-size:13px;line-height:16px;white-space:nowrap;color:#333333">4,108</div>
<div style="left:907px;top:576px;width:99px;height:27px;background:#f8c5c5"></div>
<div style="left:907px;top:582px;width:95px;text-align:right;font-size:13px;line-height:16px;white-space:nowrap;color:#cc1030">4,108</div>
<div style="left:1007px;top:576px;width:99px;height:27px;background:#fde9b2"></div>
<div style="left:1007px;top:582px;width:95px;text-align:right;font-size:13px;line-height:16px;white-space:nowrap;font-weight:bold;color:#333333">0</div>
<div style="left:1107px;top:576px;width:99px;height:27px;background:#fde9b2"></div>
<div style="left:1107px;top:582px;width:95px;text-align:right;font-size:13px;line-height:16px;white-space:nowrap;font-weight:bold;color:#333333">4,108</div>
<div style="left:1207px;top:576px;width:99px;height:27px;background:#f8c5c5"></div>
<div style="left:1207px;top:582px;width:95px;text-align:right;font-size:13px;line-height:16px;white-space:nowrap;font-weight:bold;color:#cc1030">4,108</div>
<div style="left:1px;top:603px;width:306px;height:1px;background:#ababab"></div>
<div style="left:307px;top:603px;width:1000px;height:1px;background:#e2e2e2"></div>
<svg style="left:9.2px;top:615.5px" width="11" height="7"><path d="M1 1 L5.5 5.5 L10 1" stroke="#444" stroke-width="1.5" fill="none"/></svg>
<div style="left:26.6px;top:610px;font-size:13px;line-height:16px;white-space:nowrap;color:#333333;letter-spacing:0.395px">Vishwakarma Fashions</div>
<div style="left:181px;top:610px;font-size:13px;line-height:16px;white-space:nowrap;color:#333333">10 Days</div>
<div style="left:707px;top:610px;width:95px;text-align:right;font-size:13px;line-height:16px;white-space:nowrap;color:#333333">0</div>
<div style="left:807px;top:610px;width:95px;text-align:right;font-size:13px;line-height:16px;white-space:nowrap;color:#333333">71,456</div>
<div style="left:907px;top:604px;width:99px;height:27px;background:#f8c5c5"></div>
<div style="left:907px;top:610px;width:95px;text-align:right;font-size:13px;line-height:16px;white-space:nowrap;color:#cc1030">71,456</div>
<div style="left:1007px;top:604px;width:99px;height:27px;background:#fde9b2"></div>
<div style="left:1007px;top:610px;width:95px;text-align:right;font-size:13px;line-height:16px;white-space:nowrap;font-weight:bold;color:#333333">0</div>
<div style="left:1107px;top:604px;width:99px;height:27px;background:#fde9b2"></div>
<div style="left:1107px;top:610px;width:95px;text-align:right;font-size:13px;line-height:16px;white-space:nowrap;font-weight:bold;color:#333333">71,456</div>
<div style="left:1207px;top:604px;width:99px;height:27px;background:#f8c5c5"></div>
<div style="left:1207px;top:610px;width:95px;text-align:right;font-size:13px;line-height:16px;white-space:nowrap;font-weight:bold;color:#cc1030">71,456</div>
<div style="left:1px;top:631px;width:306px;height:1px;background:#ababab"></div>
<div style="left:307px;top:631px;width:1000px;height:1px;background:#e2e2e2"></div>
<div style="left:406px;top:268px;width:1px;height:27px;background:#e2e2e2"></div>
<div style="left:506px;top:268px;width:1px;height:27px;background:#e2e2e2"></div>
<div style="left:606px;top:268px;width:1px;height:27px;background:#e2e2e2"></div>
<div style="left:706px;top:268px;width:1px;height:27px;background:#e2e2e2"></div>
<div style="left:806px;top:268px;width:1px;height:27px;background:#e2e2e2"></div>
<div style="left:906px;top:268px;width:1px;height:27px;background:#e2e2e2"></div>
<div style="left:1006px;top:268px;width:1px;height:27px;background:#e2e2e2"></div>
<div style="left:1106px;top:268px;width:1px;height:27px;background:#e2e2e2"></div>
<div style="left:1206px;top:268px;width:1px;height:27px;background:#e2e2e2"></div>
<div style="left:1306px;top:268px;width:1px;height:27px;background:#e2e2e2"></div>
<div style="left:406px;top:296px;width:1px;height:27px;background:#e2e2e2"></div>
<div style="left:506px;top:296px;width:1px;height:27px;background:#e2e2e2"></div>
<div style="left:606px;top:296px;width:1px;height:27px;background:#e2e2e2"></div>
<div style="left:706px;top:296px;width:1px;height:27px;background:#e2e2e2"></div>
<div style="left:806px;top:296px;width:1px;height:27px;background:#e2e2e2"></div>
<div style="left:906px;top:296px;width:1px;height:27px;background:#e2e2e2"></div>
<div style="left:1006px;top:296px;width:1px;height:27px;background:#e2e2e2"></div>
<div style="left:1106px;top:296px;width:1px;height:27px;background:#e2e2e2"></div>
<div style="left:1206px;top:296px;width:1px;height:27px;background:#e2e2e2"></div>
<div style="left:1306px;top:296px;width:1px;height:27px;background:#e2e2e2"></div>
<div style="left:406px;top:324px;width:1px;height:27px;background:#e2e2e2"></div>
<div style="left:506px;top:324px;width:1px;height:27px;background:#e2e2e2"></div>
<div style="left:606px;top:324px;width:1px;height:27px;background:#e2e2e2"></div>
<div style="left:706px;top:324px;width:1px;height:27px;background:#e2e2e2"></div>
<div style="left:806px;top:324px;width:1px;height:27px;background:#e2e2e2"></div>
<div style="left:906px;top:324px;width:1px;height:27px;background:#e2e2e2"></div>
<div style="left:1006px;top:324px;width:1px;height:27px;background:#e2e2e2"></div>
<div style="left:1106px;top:324px;width:1px;height:27px;background:#e2e2e2"></div>
<div style="left:1206px;top:324px;width:1px;height:27px;background:#e2e2e2"></div>
<div style="left:1306px;top:324px;width:1px;height:27px;background:#e2e2e2"></div>
<div style="left:406px;top:352px;width:1px;height:27px;background:#e2e2e2"></div>
<div style="left:506px;top:352px;width:1px;height:27px;background:#e2e2e2"></div>
<div style="left:606px;top:352px;width:1px;height:27px;background:#e2e2e2"></div>
<div style="left:706px;top:352px;width:1px;height:27px;background:#e2e2e2"></div>
<div style="left:806px;top:352px;width:1px;height:27px;background:#e2e2e2"></div>
<div style="left:906px;top:352px;width:1px;height:27px;background:#e2e2e2"></div>
<div style="left:1006px;top:352px;width:1px;height:27px;background:#e2e2e2"></div>
<div style="left:1106px;top:352px;width:1px;height:27px;background:#e2e2e2"></div>
<div style="left:1206px;top:352px;width:1px;height:27px;background:#e2e2e2"></div>
<div style="left:1306px;top:352px;width:1px;height:27px;background:#e2e2e2"></div>
<div style="left:406px;top:380px;width:1px;height:27px;background:#e2e2e2"></div>
<div style="left:506px;top:380px;width:1px;height:27px;background:#e2e2e2"></div>
<div style="left:606px;top:380px;width:1px;height:27px;background:#e2e2e2"></div>
<div style="left:706px;top:380px;width:1px;height:27px;background:#e2e2e2"></div>
<div style="left:806px;top:380px;width:1px;height:27px;background:#e2e2e2"></div>
<div style="left:906px;top:380px;width:1px;height:27px;background:#e2e2e2"></div>
<div style="left:1006px;top:380px;width:1px;height:27px;background:#e2e2e2"></div>
<div style="left:1106px;top:380px;width:1px;height:27px;background:#e2e2e2"></div>
<div style="left:1206px;top:380px;width:1px;height:27px;background:#e2e2e2"></div>
<div style="left:1306px;top:380px;width:1px;height:27px;background:#e2e2e2"></div>
<div style="left:406px;top:408px;width:1px;height:27px;background:#e2e2e2"></div>
<div style="left:506px;top:408px;width:1px;height:27px;background:#e2e2e2"></div>
<div style="left:606px;top:408px;width:1px;height:27px;background:#e2e2e2"></div>
<div style="left:706px;top:408px;width:1px;height:27px;background:#e2e2e2"></div>
<div style="left:806px;top:408px;width:1px;height:27px;background:#e2e2e2"></div>
<div style="left:906px;top:408px;width:1px;height:27px;background:#e2e2e2"></div>
<div style="left:1006px;top:408px;width:1px;height:27px;background:#e2e2e2"></div>
<div style="left:1106px;top:408px;width:1px;height:27px;background:#e2e2e2"></div>
<div style="left:1206px;top:408px;width:1px;height:27px;background:#e2e2e2"></div>
<div style="left:1306px;top:408px;width:1px;height:27px;background:#e2e2e2"></div>
<div style="left:406px;top:436px;width:1px;height:27px;background:#e2e2e2"></div>
<div style="left:506px;top:436px;width:1px;height:27px;background:#e2e2e2"></div>
<div style="left:606px;top:436px;width:1px;height:27px;background:#e2e2e2"></div>
<div style="left:706px;top:436px;width:1px;height:27px;background:#e2e2e2"></div>
<div style="left:806px;top:436px;width:1px;height:27px;background:#e2e2e2"></div>
<div style="left:906px;top:436px;width:1px;height:27px;background:#e2e2e2"></div>
<div style="left:1006px;top:436px;width:1px;height:27px;background:#e2e2e2"></div>
<div style="left:1106px;top:436px;width:1px;height:27px;background:#e2e2e2"></div>
<div style="left:1206px;top:436px;width:1px;height:27px;background:#e2e2e2"></div>
<div style="left:1306px;top:436px;width:1px;height:27px;background:#e2e2e2"></div>
<div style="left:406px;top:464px;width:1px;height:27px;background:#e2e2e2"></div>
<div style="left:506px;top:464px;width:1px;height:27px;background:#e2e2e2"></div>
<div style="left:606px;top:464px;width:1px;height:27px;background:#e2e2e2"></div>
<div style="left:706px;top:464px;width:1px;height:27px;background:#e2e2e2"></div>
<div style="left:806px;top:464px;width:1px;height:27px;background:#e2e2e2"></div>
<div style="left:906px;top:464px;width:1px;height:27px;background:#e2e2e2"></div>
<div style="left:1006px;top:464px;width:1px;height:27px;background:#e2e2e2"></div>
<div style="left:1106px;top:464px;width:1px;height:27px;background:#e2e2e2"></div>
<div style="left:1206px;top:464px;width:1px;height:27px;background:#e2e2e2"></div>
<div style="left:1306px;top:464px;width:1px;height:27px;background:#e2e2e2"></div>
<div style="left:406px;top:492px;width:1px;height:27px;background:#e2e2e2"></div>
<div style="left:506px;top:492px;width:1px;height:27px;background:#e2e2e2"></div>
<div style="left:606px;top:492px;width:1px;height:27px;background:#e2e2e2"></div>
<div style="left:706px;top:492px;width:1px;height:27px;background:#e2e2e2"></div>
<div style="left:806px;top:492px;width:1px;height:27px;background:#e2e2e2"></div>
<div style="left:906px;top:492px;width:1px;height:27px;background:#e2e2e2"></div>
<div style="left:1006px;top:492px;width:1px;height:27px;background:#e2e2e2"></div>
<div style="left:1106px;top:492px;width:1px;height:27px;background:#e2e2e2"></div>
<div style="left:1206px;top:492px;width:1px;height:27px;background:#e2e2e2"></div>
<div style="left:1306px;top:492px;width:1px;height:27px;background:#e2e2e2"></div>
<div style="left:406px;top:520px;width:1px;height:27px;background:#e2e2e2"></div>
<div style="left:506px;top:520px;width:1px;height:27px;background:#e2e2e2"></div>
<div style="left:606px;top:520px;width:1px;height:27px;background:#e2e2e2"></div>
<div style="left:706px;top:520px;width:1px;height:27px;background:#e2e2e2"></div>
<div style="left:806px;top:520px;width:1px;height:27px;background:#e2e2e2"></div>
<div style="left:906px;top:520px;width:1px;height:27px;background:#e2e2e2"></div>
<div style="left:1006px;top:520px;width:1px;height:27px;background:#e2e2e2"></div>
<div style="left:1106px;top:520px;width:1px;height:27px;background:#e2e2e2"></div>
<div style="left:1206px;top:520px;width:1px;height:27px;background:#e2e2e2"></div>
<div style="left:1306px;top:520px;width:1px;height:27px;background:#e2e2e2"></div>
<div style="left:406px;top:548px;width:1px;height:27px;background:#e2e2e2"></div>
<div style="left:506px;top:548px;width:1px;height:27px;background:#e2e2e2"></div>
<div style="left:606px;top:548px;width:1px;height:27px;background:#e2e2e2"></div>
<div style="left:706px;top:548px;width:1px;height:27px;background:#e2e2e2"></div>
<div style="left:806px;top:548px;width:1px;height:27px;background:#e2e2e2"></div>
<div style="left:906px;top:548px;width:1px;height:27px;background:#e2e2e2"></div>
<div style="left:1006px;top:548px;width:1px;height:27px;background:#e2e2e2"></div>
<div style="left:1106px;top:548px;width:1px;height:27px;background:#e2e2e2"></div>
<div style="left:1206px;top:548px;width:1px;height:27px;background:#e2e2e2"></div>
<div style="left:1306px;top:548px;width:1px;height:27px;background:#e2e2e2"></div>
<div style="left:406px;top:576px;width:1px;height:27px;background:#e2e2e2"></div>
<div style="left:506px;top:576px;width:1px;height:27px;background:#e2e2e2"></div>
<div style="left:606px;top:576px;width:1px;height:27px;background:#e2e2e2"></div>
<div style="left:706px;top:576px;width:1px;height:27px;background:#e2e2e2"></div>
<div style="left:806px;top:576px;width:1px;height:27px;background:#e2e2e2"></div>
<div style="left:906px;top:576px;width:1px;height:27px;background:#e2e2e2"></div>
<div style="left:1006px;top:576px;width:1px;height:27px;background:#e2e2e2"></div>
<div style="left:1106px;top:576px;width:1px;height:27px;background:#e2e2e2"></div>
<div style="left:1206px;top:576px;width:1px;height:27px;background:#e2e2e2"></div>
<div style="left:1306px;top:576px;width:1px;height:27px;background:#e2e2e2"></div>
<div style="left:406px;top:604px;width:1px;height:27px;background:#e2e2e2"></div>
<div style="left:506px;top:604px;width:1px;height:27px;background:#e2e2e2"></div>
<div style="left:606px;top:604px;width:1px;height:27px;background:#e2e2e2"></div>
<div style="left:706px;top:604px;width:1px;height:27px;background:#e2e2e2"></div>
<div style="left:806px;top:604px;width:1px;height:27px;background:#e2e2e2"></div>
<div style="left:906px;top:604px;width:1px;height:27px;background:#e2e2e2"></div>
<div style="left:1006px;top:604px;width:1px;height:27px;background:#e2e2e2"></div>
<div style="left:1106px;top:604px;width:1px;height:27px;background:#e2e2e2"></div>
<div style="left:1206px;top:604px;width:1px;height:27px;background:#e2e2e2"></div>
<div style="left:1306px;top:604px;width:1px;height:27px;background:#e2e2e2"></div>
<div style="left:406px;top:632px;width:1px;height:27px;background:#e2e2e2"></div>
<div style="left:506px;top:632px;width:1px;height:27px;background:#e2e2e2"></div>
<div style="left:606px;top:632px;width:1px;height:27px;background:#e2e2e2"></div>
<div style="left:706px;top:632px;width:1px;height:27px;background:#e2e2e2"></div>
<div style="left:806px;top:632px;width:1px;height:27px;background:#e2e2e2"></div>
<div style="left:906px;top:632px;width:1px;height:27px;background:#e2e2e2"></div>
<div style="left:1006px;top:632px;width:1px;height:27px;background:#e2e2e2"></div>
<div style="left:1106px;top:632px;width:1px;height:27px;background:#e2e2e2"></div>
<div style="left:1206px;top:632px;width:1px;height:27px;background:#e2e2e2"></div>
<div style="left:1306px;top:632px;width:1px;height:27px;background:#e2e2e2"></div>
<div style="left:176px;top:268px;width:1px;height:363px;background:#ababab"></div>
<div style="left:306px;top:268px;width:1px;height:406px;background:#ababab"></div>
<div style="left:2px;top:632px;width:304px;height:27px;background:#fddb84"></div>
<div style="left:6.5px;top:638px;font-size:13px;line-height:16px;white-space:nowrap;font-weight:bold;color:#111">Grand Total</div>
<div style="left:307px;top:632px;width:99px;height:27px;background:#c6e0a0"></div>
<div style="left:307px;top:638px;width:95px;text-align:right;font-size:13px;line-height:16px;white-space:nowrap;font-weight:bold;color:#2f6a12">(1,21,74,603)</div>
<div style="left:407px;top:632px;width:99px;height:27px;background:#fde9b2"></div>
<div style="left:407px;top:638px;width:95px;text-align:right;font-size:13px;line-height:16px;white-space:nowrap;font-weight:bold;color:#333333">4,08,453</div>
<div style="left:507px;top:632px;width:99px;height:27px;background:#fde9b2"></div>
<div style="left:507px;top:638px;width:95px;text-align:right;font-size:13px;line-height:16px;white-space:nowrap;font-weight:bold;color:#333333">13,91,246</div>
<div style="left:607px;top:632px;width:99px;height:27px;background:#f8c5c5"></div>
<div style="left:607px;top:638px;width:95px;text-align:right;font-size:13px;line-height:16px;white-space:nowrap;font-weight:bold;color:#cc1030">9,82,793</div>
<div style="left:707px;top:632px;width:99px;height:27px;background:#fde9b2"></div>
<div style="left:707px;top:638px;width:95px;text-align:right;font-size:13px;line-height:16px;white-space:nowrap;font-weight:bold;color:#333333">6,46,319</div>
<div style="left:807px;top:632px;width:99px;height:27px;background:#fde9b2"></div>
<div style="left:807px;top:638px;width:95px;text-align:right;font-size:13px;line-height:16px;white-space:nowrap;font-weight:bold;color:#333333">1,18,33,276</div>
<div style="left:907px;top:632px;width:99px;height:27px;background:#f8c5c5"></div>
<div style="left:907px;top:638px;width:95px;text-align:right;font-size:13px;line-height:16px;white-space:nowrap;font-weight:bold;color:#cc1030">1,11,86,957</div>
<div style="left:1007px;top:632px;width:99px;height:27px;background:#fde9b2"></div>
<div style="left:1007px;top:638px;width:95px;text-align:right;font-size:13px;line-height:16px;white-space:nowrap;font-weight:bold;color:#333333">2,09,94,611</div>
<div style="left:1107px;top:632px;width:99px;height:27px;background:#fde9b2"></div>
<div style="left:1107px;top:638px;width:95px;text-align:right;font-size:13px;line-height:16px;white-space:nowrap;font-weight:bold;color:#333333">1,79,06,703</div>
<div style="left:1207px;top:632px;width:99px;height:27px;background:#c6e0a0"></div>
<div style="left:1207px;top:638px;width:95px;text-align:right;font-size:13px;line-height:16px;white-space:nowrap;font-weight:bold;color:#2f6a12">(30,87,908)</div>
<div style="left:1px;top:659px;width:306px;height:1px;background:#ababab"></div>
<div style="left:307px;top:659px;width:1000px;height:1px;background:#e2e2e2"></div>
<div style="left:0px;top:0px;width:1325px;height:1px;background:#000"></div>
<div style="left:0px;top:0px;width:1px;height:675px;background:#000"></div>
<div style="left:1324px;top:0px;width:1px;height:675px;background:#000"></div>
<div style="left:0px;top:674px;width:1325px;height:1px;background:#000"></div>
</body></html>
